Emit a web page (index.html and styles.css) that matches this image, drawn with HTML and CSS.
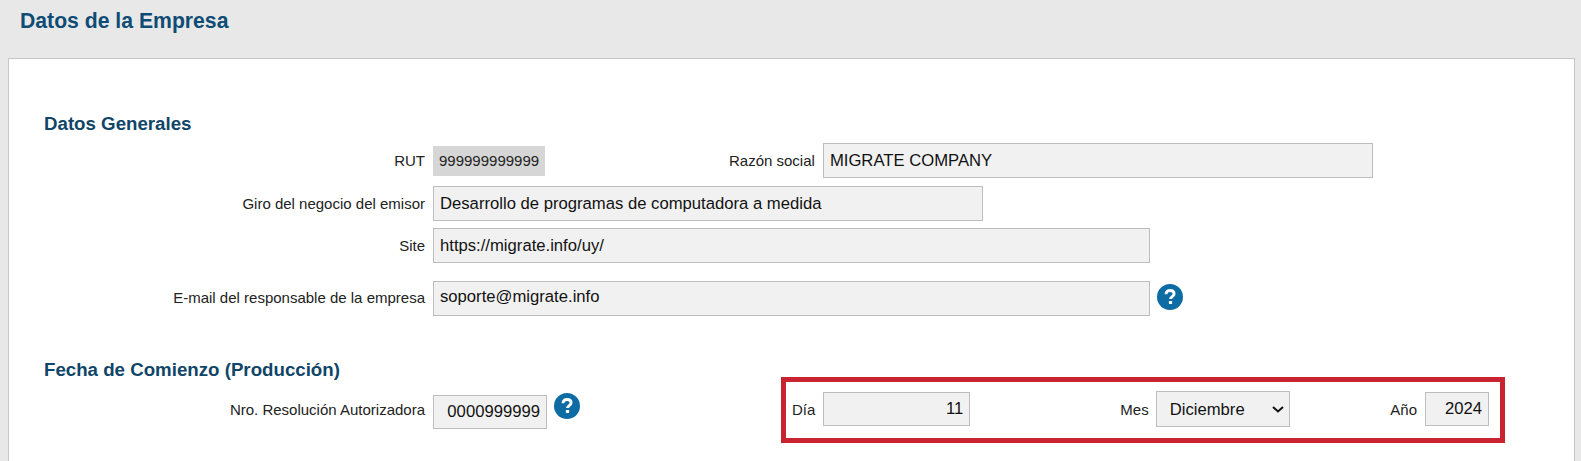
FILE: index.html
```html
<!DOCTYPE html>
<html lang="es">
<head>
  <meta charset="UTF-8" />
  <title>Datos de la Empresa</title>
  <link rel="stylesheet" href="styles.css">
</head>
<body>
  <header class="page-header">
    <h1>Datos de la Empresa</h1>
  </header>

  <main class="panel">
    <section class="generales">
      <h2>Datos Generales</h2>

      <div class="form-row row-rut">
        <label for="rut">RUT</label>
        <span class="static-value" id="rut">999999999999</span>
        <label class="label-razon" for="razon">Razón social</label>
        <input class="field field-razon" type="text" id="razon" value="MIGRATE COMPANY" readonly>
      </div>

      <div class="form-row row-giro">
        <label for="giro">Giro del negocio del emisor</label>
        <input class="field field-wide" type="text" id="giro" value="Desarrollo de programas de computadora a medida" readonly>
      </div>

      <div class="form-row row-site">
        <label for="site">Site</label>
        <input class="field field-wide" type="text" id="site" value="https://migrate.info/uy/" readonly>
      </div>

      <div class="form-row row-email">
        <label for="email">E-mail del responsable de la empresa</label>
        <input class="field field-wide" type="text" id="email" value="soporte@migrate.info" readonly>
        <a class="help" href="#" aria-label="Ayuda">
          <svg viewBox="0 0 26 26" width="26" height="26">
            <circle cx="13" cy="13" r="13" fill="#0c6ca3"/>
            <path d="M9 10.2c0-2.4 1.8-3.7 4.1-3.7 2.4 0 4 1.3 4 3.3 0 2.9-3.6 2.8-3.6 5.2" fill="none" stroke="#fff" stroke-width="2.9"/>
            <rect x="11.9" y="17" width="3.2" height="3" rx="0.5" fill="#fff"/>
          </svg>
        </a>
      </div>
    </section>

    <section class="fecha">
      <div class="fecha-left">
        <h2>Fecha de Comienzo (Producción)</h2>
        <div class="form-row row-nro">
          <label for="nro">Nro. Resolución Autorizadora</label>
          <input class="field field-nro" type="text" id="nro" value="0000999999" readonly>
          <a class="help help-nro" href="#" aria-label="Ayuda">
            <svg viewBox="0 0 26 26" width="26" height="26">
              <circle cx="13" cy="13" r="13" fill="#0c6ca3"/>
              <path d="M9 10.2c0-2.4 1.8-3.7 4.1-3.7 2.4 0 4 1.3 4 3.3 0 2.9-3.6 2.8-3.6 5.2" fill="none" stroke="#fff" stroke-width="2.9"/>
              <rect x="11.9" y="17" width="3.2" height="3" rx="0.5" fill="#fff"/>
            </svg>
          </a>
        </div>
      </div>

      <div class="fecha-box">
        <div class="date-part part-dia">
          <label for="dia">Día</label>
          <input class="field field-dia" type="text" id="dia" value="11" readonly>
        </div>
        <div class="date-part part-mes">
          <label for="mes">Mes</label>
          <select class="field field-mes" id="mes">
            <option>Diciembre</option>
          </select>
        </div>
        <div class="date-part part-anio">
          <label for="anio">Año</label>
          <input class="field field-anio" type="text" id="anio" value="2024" readonly>
        </div>
      </div>
    </section>
  </main>
</body>
</html>
```

FILE: styles.css
```css
html,
body {
  height: 100%;
}

body {
  margin: 0;
  overflow: hidden;
  background-color: #e8e8e8;
  font-family: "Liberation Sans", Arial, sans-serif;
  color: #222;
}

.page-header {
  height: 58px;
  padding-left: 20px;
}

.page-header h1 {
  margin: 0;
  padding-top: 10px;
  font-size: 21.2px;
  line-height: 22px;
  font-weight: 700;
  color: #0f4c75;
}

.panel {
  margin: 0 6px 0 8px;
  padding: 40px 0 0 35px;
  height: 403px;
  box-sizing: border-box;
  background-color: #fff;
  border: 1px solid #c6c6c6;
  border-bottom: none;
}

h2 {
  margin: 0;
  font-size: 18.7px;
  line-height: 24px;
  font-weight: 700;
  color: #0f4568;
}

.generales h2 {
  margin-top: 13px;
  margin-bottom: 7px;
}

.form-row {
  display: flex;
  align-items: center;
}

.form-row > label:first-child {
  width: 381px;
  margin-right: 8px;
  text-align: right;
}

label {
  font-size: 15px;
}

.field {
  box-sizing: border-box;
  height: 35px;
  padding: 0 6px;
  background-color: #f1f1f1;
  border: 1px solid #bdbdbd;
  border-radius: 0;
  font-family: inherit;
  font-size: 16.66px;
  color: #111;
  outline: none;
}

.static-value {
  box-sizing: border-box;
  width: 112px;
  height: 30px;
  padding: 0 6px;
  background-color: #d6d6d6;
  font-size: 15px;
  line-height: 29px;
}

.label-razon {
  margin-left: 184px;
  margin-right: 8px;
}

.field-razon {
  width: 550px;
}

.field-wide {
  width: 717px;
}

.row-giro {
  margin-top: 8px;
}

.row-giro .field-wide {
  width: 550px;
}

.row-site {
  margin-top: 7px;
}

.row-email {
  margin-top: 18px;
}

.row-email label {
  margin-bottom: 3px;
}

.row-email .field {
  padding-bottom: 3px;
}

.help {
  display: block;
  height: 26px;
  margin-left: 7px;
}

.row-email .help {
  margin-bottom: 3px;
}

.fecha {
  display: flex;
  align-items: flex-end;
  margin-top: 42px;
}

.fecha-left {
  width: 737px;
}

.fecha-left h2 {
  margin-bottom: 13px;
}

.row-nro {
  margin-bottom: 14px;
}

.row-nro label {
  margin-bottom: 6px;
}

.field-nro {
  width: 114px;
  height: 34px;
  text-align: right;
}

.help-nro {
  align-self: flex-start;
  margin-top: -2px;
}

.fecha-box {
  display: flex;
  align-items: center;
  box-sizing: border-box;
  width: 724px;
  height: 66px;
  padding: 0 11px 2px 6px;
  border: 5px solid #c8232f;
}

.date-part {
  display: flex;
  align-items: center;
  gap: 8px;
}

.part-mes {
  margin-left: 150px;
  gap: 7px;
}

.part-anio {
  margin-left: auto;
}

.field-dia {
  width: 147px;
  height: 34px;
  text-align: right;
}

.field-mes {
  width: 134px;
  height: 36px;
  padding-left: 13px;
  appearance: none;
  background-image: url("data:image/svg+xml,%3Csvg xmlns='http://www.w3.org/2000/svg' width='12' height='7'%3E%3Cpath d='M1 1l5 4.5L11 1' fill='none' stroke='%23111' stroke-width='2'/%3E%3C/svg%3E");
  background-repeat: no-repeat;
  background-position: right 5px center;
}

.field-anio {
  width: 64px;
  height: 34px;
  text-align: right;
}
```
